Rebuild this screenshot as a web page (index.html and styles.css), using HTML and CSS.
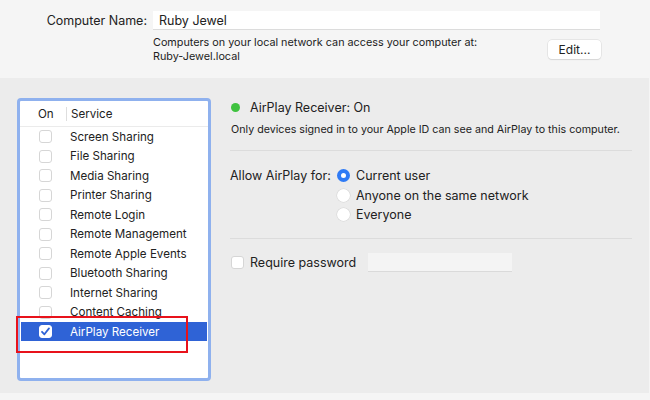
FILE: index.html
```html
<!DOCTYPE html>
<html lang="en">
<head>
  <meta charset="UTF-8" />
  <title>Sharing</title>
  <link rel="stylesheet" href="styles.css">
</head>
<body>

  <div class="top">
    <div class="name-row">
      <label class="name-label">Computer Name:</label>
      <div class="name-field">Ruby Jewel</div>
    </div>
    <div class="info-row">
      <p class="info-text">Computers on your local network can access your computer at:<br>Ruby-Jewel.local</p>
      <button class="edit-btn">Edit...</button>
    </div>
  </div>

  <div class="panel">
    <div class="list-wrap">
      <div class="service-list">
        <div class="list-head">
          <span class="col-on">On</span>
          <span class="col-sep"></span>
          <span class="col-service">Service</span>
        </div>
        <div class="row"><span class="box"></span>Screen Sharing</div>
        <div class="row"><span class="box"></span>File Sharing</div>
        <div class="row"><span class="box"></span>Media Sharing</div>
        <div class="row"><span class="box"></span>Printer Sharing</div>
        <div class="row"><span class="box"></span>Remote Login</div>
        <div class="row"><span class="box"></span>Remote Management</div>
        <div class="row"><span class="box"></span>Remote Apple Events</div>
        <div class="row"><span class="box"></span>Bluetooth Sharing</div>
        <div class="row"><span class="box"></span>Internet Sharing</div>
        <div class="row"><span class="box"></span>Content Caching</div>
        <div class="row selected">
          <span class="box checked">
            <svg width="11" height="11" viewBox="0 0 11 11"><path d="M2 5.8 L4.4 8.3 L9 2.4" fill="none" stroke="#2f63d6" stroke-width="1.8" stroke-linecap="round" stroke-linejoin="round"/></svg>
          </span>AirPlay Receiver
        </div>
      </div>
      <div class="highlight"></div>
    </div>

    <div class="detail">
      <div class="status"><span class="dot"></span>AirPlay Receiver: On</div>
      <p class="status-note">Only devices signed in to your Apple ID can see and AirPlay to this computer.</p>
      <hr class="sep">

      <div class="allow">
        <span class="allow-label">Allow AirPlay for:</span>
        <div class="radios">
          <div class="radio-row"><span class="radio on"></span>Current user</div>
          <div class="radio-row"><span class="radio"></span>Anyone on the same network</div>
          <div class="radio-row"><span class="radio"></span>Everyone</div>
        </div>
      </div>
      <hr class="sep">

      <div class="password">
        <span class="box"></span>
        <span class="pw-label">Require password</span>
        <div class="pw-field"></div>
      </div>
    </div>
  </div>

</body>
</html>
```

FILE: styles.css
```css
body {
  margin: 0;
  background: #f5f5f5;
  color: #222;
  font-family: Inter, "Noto Sans", sans-serif;
  font-size: 12.5px;
}

.top {
  height: 78px;
  box-sizing: border-box;
  padding-top: 11px;
}

.name-row {
  display: flex;
  align-items: center;
  height: 19px;
}

.name-label {
  width: 147px;
  text-align: right;
  margin-right: 6px;
}

.name-field {
  width: 447px;
  height: 19px;
  line-height: 19px;
  padding-left: 6px;
  background: #fff;
  border-bottom: 1px solid #dcdcdc;
  box-sizing: border-box;
}

.info-row {
  display: flex;
  align-items: flex-start;
  margin-left: 153px;
  width: 448px;
  margin-top: 6px;
}

.info-text {
  margin: 0;
  flex: 1;
  font-size: 10.8px;
  line-height: 14px;
}

.edit-btn {
  margin-top: 4px;
  width: 53px;
  height: 19px;
  padding: 0;
  font: inherit;
  font-size: 12px;
  color: #222;
  background: #fff;
  border: none;
  border-radius: 4px;
  box-shadow: 0 0 0 0.5px #d8d8d8, 0 1px 1px rgba(0,0,0,0.12);
}

.panel {
  display: flex;
  height: 315px;
  box-sizing: border-box;
  padding: 20px 0 0 17px;
  background: #ececec;
  margin-right: 1px;
}

.list-wrap {
  position: relative;
  width: 194px;
  height: 283px;
}

.service-list {
  height: 100%;
  box-sizing: border-box;
  border: 3px solid #8fb1ee;
  border-radius: 4px;
  background: #fff;
  font-size: 11.6px;
}

.list-head {
  display: flex;
  align-items: center;
  height: 26px;
  border-bottom: 1px solid #ebebeb;
  box-sizing: border-box;
}

.col-on {
  margin-left: 18px;
  width: 28px;
}

.col-sep {
  width: 1px;
  height: 14px;
  background: #dedede;
}

.col-service {
  margin-left: 4px;
}

.row {
  display: flex;
  align-items: center;
  height: 19.5px;
  margin-right: 1px;
  margin-left: 1px;
}

.box {
  width: 13px;
  height: 13px;
  box-sizing: border-box;
  border: 1px solid #d6d6d6;
  border-radius: 3px;
  background: #fff;
  display: inline-flex;
  align-items: center;
  justify-content: center;
}

.row .box {
  margin-left: 18px;
  margin-right: 18px;
}

.row.selected {
  background: #2f63d6;
  color: #fff;
  height: 19px;
}

.box.checked {
  border-color: #fff;
}

.highlight {
  position: absolute;
  left: -1px;
  top: 218px;
  width: 172px;
  height: 37px;
  box-sizing: border-box;
  border: 2px solid #e8121b;
}

.detail {
  margin-left: 19px;
  width: 402px;
}

.status {
  display: flex;
  align-items: center;
  height: 18px;
}

.dot {
  width: 9px;
  height: 9px;
  border-radius: 50%;
  background: #3fc23f;
  margin-left: 1px;
  margin-right: 10px;
}

.status-note {
  margin: 7px 0 0 1px;
  font-size: 10.7px;
  line-height: 14px;
}

.sep {
  margin: 13px 0 0;
  border: none;
  border-top: 1px solid #dcdcdc;
}

.allow {
  display: flex;
  margin-top: 15px;
}

.allow-label {
  width: 107px;
  line-height: 19.5px;
}

.radio-row {
  display: flex;
  align-items: center;
  height: 19.5px;
}

.radio {
  width: 13px;
  height: 13px;
  box-sizing: border-box;
  border-radius: 50%;
  background: #fff;
  box-shadow: 0 0 0 0.5px #d4d4d4;
  margin-right: 6px;
}

.radio.on {
  border: 4px solid #2f7bf5;
  box-shadow: none;
}

.sep + .password {
  margin-top: 14px;
}

.password {
  display: flex;
  align-items: center;
  height: 19px;
}

.password .box {
  margin-left: 1px;
}

.pw-label {
  margin-left: 6px;
  width: 118px;
}

.pw-field {
  width: 144px;
  height: 18px;
  background: #f4f4f4;
  border-bottom: 1px solid #dadada;
}
```
